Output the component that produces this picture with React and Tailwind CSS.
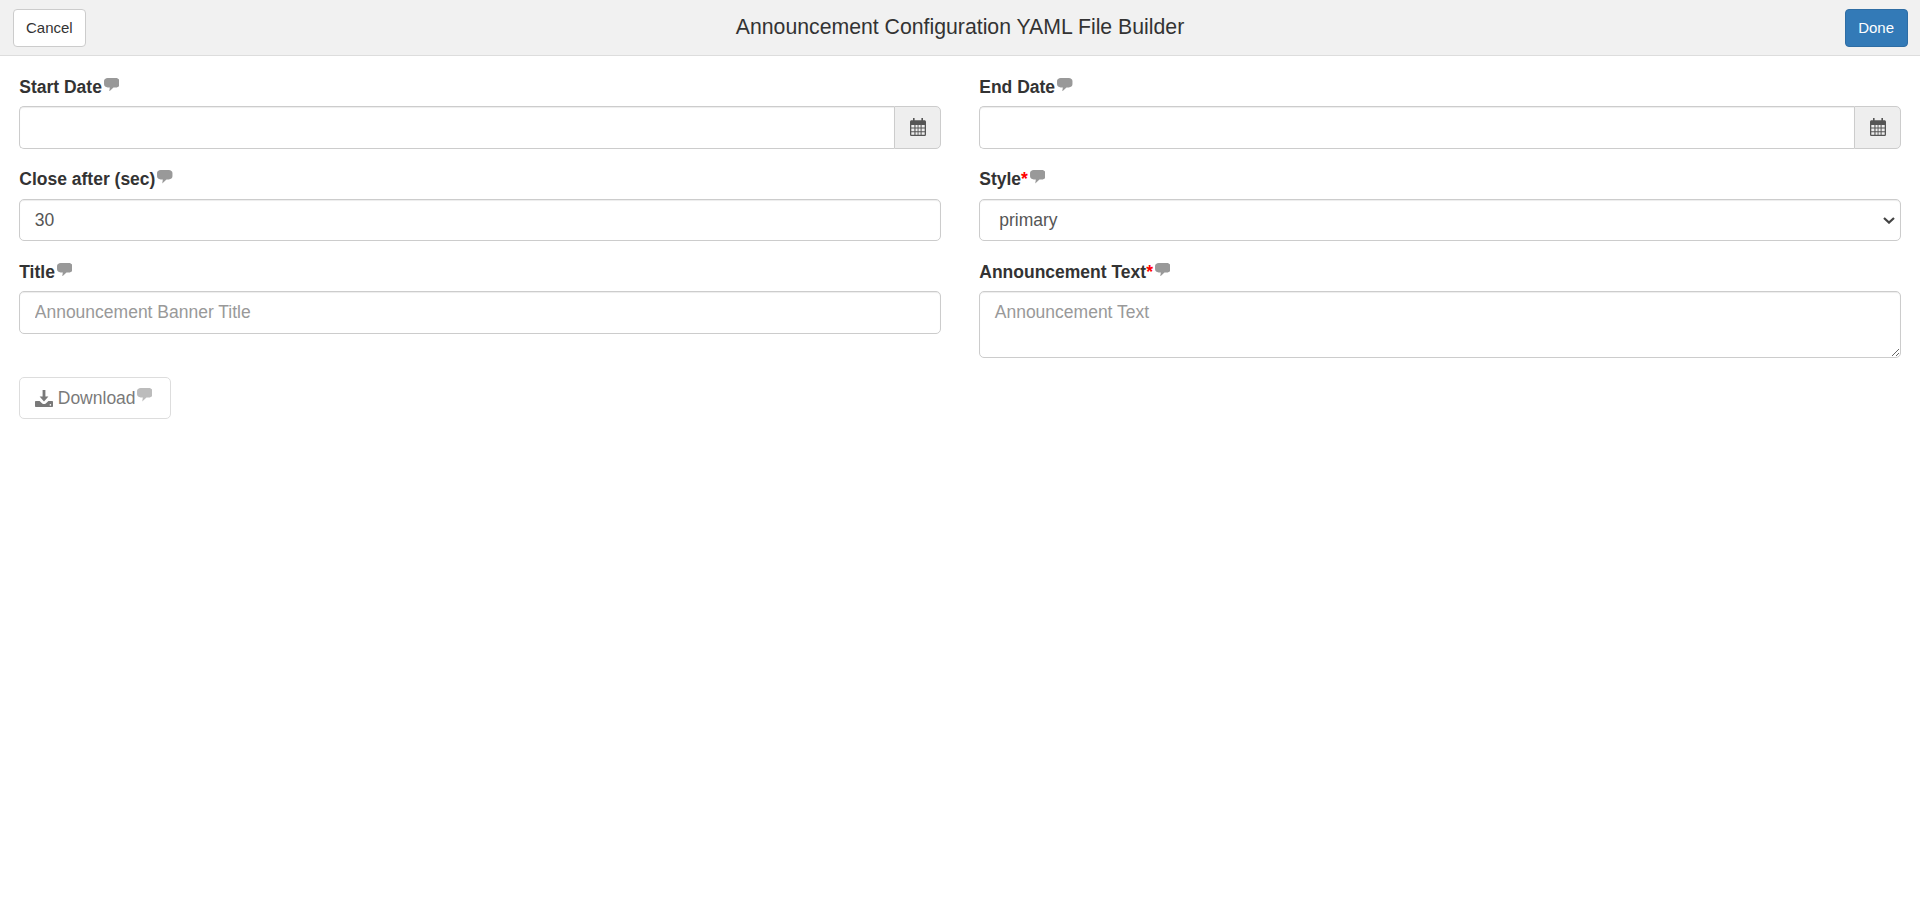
const font = "font-['Liberation_Sans',Arial,sans-serif]";

function Bubble({ className = "" }) {
  return (
    <svg viewBox="0 0 16 14" className={`inline-block w-[15.5px] h-[13.5px] ${className}`} fill="currentColor" aria-hidden="true">
      <path d="M3.8 0h8.4C14.4 0 16 1.4 16 3.2v3.4c0 1.8-1.6 3.2-3.8 3.2H9.8L5.4 14l.6-4.2H3.8C1.6 9.8 0 8.4 0 6.6V3.2C0 1.4 1.6 0 3.8 0z" />
    </svg>
  );
}

function Calendar() {
  return (
    <svg viewBox="0 0 16 18" className="w-[16px] h-[18px] text-[#555]" aria-hidden="true">
      <path fill="currentColor" fillRule="evenodd" d="M3 0h1.6v2.2H11.4V0H13v2.2h1.4c.9 0 1.6.7 1.6 1.6v12.6c0 .9-.7 1.6-1.6 1.6H1.6C.7 18 0 17.3 0 16.4V3.8C0 2.9.7 2.2 1.6 2.2H3V0zM1.3 7v2.6h3.1V7H1.3zm4.2 0v2.6h2.1V7H5.5zm3 0v2.6h2.1V7H8.5zm3.1 0v2.6h3.1V7h-3.1zM1.3 10.6v2.6h3.1v-2.6H1.3zm4.2 0v2.6h2.1v-2.6H5.5zm3 0v2.6h2.1v-2.6H8.5zm3.1 0v2.6h3.1v-2.6h-3.1zM1.3 14.2v2.5h3.1v-2.5H1.3zm4.2 0v2.5h2.1v-2.5H5.5zm3 0v2.5h2.1v-2.5H8.5zm3.1 0v2.5h3.1v-2.5h-3.1z" />
    </svg>
  );
}

function DownloadIcon() {
  return (
    <svg viewBox="0 0 18 17" className="w-[18px] h-[17px]" fill="currentColor" aria-hidden="true">
      <path d="M7.6 0h2.8v6.4h3L9 11.4 4.6 6.4h3V0z" />
      <path fillRule="evenodd" d="M1 11h3.6l2.6 2.4c1 .9 2.6.9 3.6 0l2.6-2.4H17c.6 0 1 .4 1 1v4c0 .6-.4 1-1 1H1c-.6 0-1-.4-1-1v-4c0-.6.4-1 1-1zm13.6 3.9a.8.8 0 1 0 1.6 0 .8.8 0 0 0-1.6 0z" />
    </svg>
  );
}

function Label({ text, required }) {
  return (
    <label className="flex items-start h-[25px] mb-[6.25px] pl-[0.5px] text-[17.5px] leading-[25px] font-bold text-[#333]">
      <span>{text}</span>
      {required && <span className="text-[#f00] font-bold">*</span>}
      <Bubble className="text-[#999] mt-[3px] ml-[2px]" />
    </label>
  );
}

const control =
  "block w-full h-[42.5px] px-[15px] bg-white border border-[#ccc] text-[17.5px] text-[#555] outline-none shadow-[inset_0_1px_1px_rgba(0,0,0,0.075)] placeholder:text-[#999] placeholder:opacity-100";

function DateField({ label }) {
  return (
    <div className="mb-[18.75px]">
      <Label text={label} />
      <div className="flex">
        <input type="text" className={`${control} py-[7.5px] rounded-l-[5px] border-r-0 min-w-0 flex-1`} />
        <span className="flex items-center justify-center w-[47px] h-[42.5px] bg-[#eee] border border-[#ccc] rounded-r-[5px]">
          <Calendar />
        </span>
      </div>
    </div>
  );
}

export default function App() {
  return (
    <div className={`${font} min-h-[912px] bg-white text-[#333]`}>
      <header className="grid grid-cols-[1fr_auto_1fr] items-center h-[56px] px-[12.5px] bg-[#f1f1f1] border-b border-[#ddd]">
        <button className="justify-self-start h-[38px] mt-[1px] px-[12.5px] bg-white border border-[#ccc] rounded-[4px] text-[15px] text-[#333]">
          Cancel
        </button>
        <h1 className="text-[21.25px] font-normal text-[#333] leading-[25px] -mt-[1px]">
          Announcement Configuration YAML File Builder
        </h1>
        <button className="justify-self-end h-[38px] mt-[1px] px-[12.5px] bg-[#337ab7] border border-[#2e6da4] rounded-[4px] text-[15px] text-white">
          Done
        </button>
      </header>
      <main className="grid grid-cols-2 pt-[18.75px]">
        <div className="px-[18.75px]">
          <DateField label="Start Date" />
          <div className="mb-[18.75px]">
            <Label text="Close after (sec)" />
            <input type="text" defaultValue="30" className={`${control} pt-[9px] pb-[7.5px] rounded-[5px]`} />
          </div>
          <div className="mb-[18.75px]">
            <Label text="Title" />
            <input type="text" placeholder="Announcement Banner Title" className={`${control} py-[7.5px] rounded-[5px]`} />
          </div>
        </div>
        <div className="px-[18.75px]">
          <DateField label="End Date" />
          <div className="mb-[18.75px]">
            <Label text="Style" required />
            <div className="relative">
              <select defaultValue="primary" className={`${control} appearance-none pl-[19.5px] py-[7.5px] rounded-[5px]`}>
                <option value="primary">primary</option>
                <option value="info">info</option>
                <option value="warning">warning</option>
                <option value="danger">danger</option>
              </select>
              <svg viewBox="0 0 12 7" className="absolute right-[6px] top-[18px] w-[12px] h-[7px] text-[#444]" fill="none" stroke="currentColor" strokeWidth="2.2" aria-hidden="true">
                <path d="M1 1l5 4.6L11 1" />
              </svg>
            </div>
          </div>
          <div className="mb-[19.25px]">
            <Label text="Announcement Text" required />
            <textarea placeholder="Announcement Text" className={`${control} h-[67px] pt-[6.5px] pb-[7.5px] rounded-[5px]`} />
          </div>
        </div>
        <div className="px-[18.75px] col-span-2">
          <button disabled className="inline-flex items-center h-[42px] pl-[15px] pr-[18px] bg-white border border-[#ccc] rounded-[5px] text-[17.5px] text-[#333] opacity-65">
            <DownloadIcon />
            <span className="ml-[5px]">Download</span>
            <Bubble className="text-[#999] -mt-[7px] ml-[1px]" />
          </button>
        </div>
      </main>
    </div>
  );
}
